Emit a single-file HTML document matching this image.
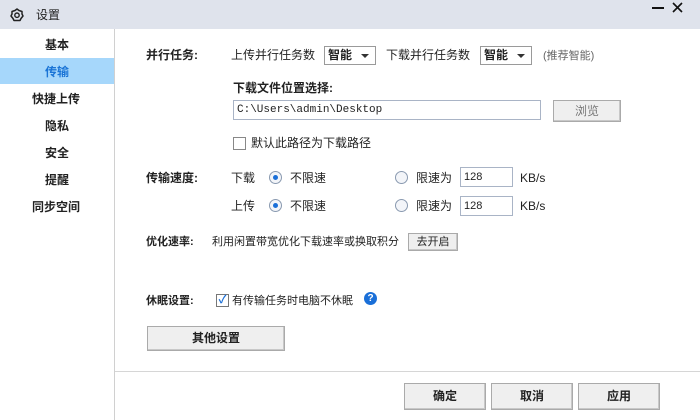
<!DOCTYPE html>
<html><head><meta charset="utf-8"><style>
*{margin:0;padding:0;box-sizing:border-box}
body{width:700px;height:420px;background:#fff;position:relative;overflow:hidden;font-family:"Liberation Sans","Noto Sans CJK SC",sans-serif;font-size:12px;color:#222}
.a{position:absolute;white-space:nowrap;line-height:16px}
.b{font-weight:bold}
.sel{position:absolute;border:1px solid #9a9a9a;background:#fff;height:19px;font-weight:bold;padding-left:3px;line-height:17px}
.sel:after{content:"";position:absolute;right:6px;top:7px;border:4px solid transparent;border-top:4px solid #333;border-bottom:none}
.btn{position:absolute;background:#efefef;border:1px solid #aaa;text-align:center;box-shadow:inset -1px -1px 0 #c8c8c8}
.radio{position:absolute;width:13px;height:13px;border-radius:50%;border:1px solid #8a9ab0;background:#f3f5f9}
.radio.on:after{content:"";position:absolute;left:3px;top:3px;width:5px;height:5px;border-radius:50%;background:#1a6fd8}
.inp{position:absolute;border:1px solid #a9b4c6;background:#fff;height:20px;line-height:18px;padding-left:3px}
</style></head><body>
<div style="position:absolute;left:0;top:0;width:700px;height:29px;background:#dfe3ec"></div>
<svg class="a" style="left:10px;top:8px" width="14" height="14" viewBox="0 0 14 14"><polygon points="7,1 9,2.5 12,3.5 12,6 13,8 11,10.5 10,12.5 7,12.5 4,12.5 3,10.5 1,8 2,6 2,3.5 5,2.5" fill="none" stroke="#222" stroke-width="1.5" stroke-linejoin="round"/><circle cx="7" cy="7.2" r="2.2" fill="none" stroke="#222" stroke-width="1.4"/></svg>
<div class="a" style="left:36px;top:7px">设置</div>
<div style="position:absolute;left:652px;top:7px;width:12px;height:2px;background:#111"></div>
<svg class="a" style="left:672px;top:2px" width="11" height="11" viewBox="0 0 11 11"><path d="M1 1L10 10M10 1L1 10" stroke="#111" stroke-width="1.6"/></svg>
<div style="position:absolute;left:114px;top:29px;width:1px;height:391px;background:#d0d0d0"></div>
<div style="position:absolute;left:0;top:58px;width:114px;height:26px;background:#a6d7fb"></div>
<div class="a b" style="left:45px;top:37px">基本</div>
<div class="a b" style="left:45px;top:64px;color:#1a74d6">传输</div>
<div class="a b" style="left:32px;top:91px">快捷上传</div>
<div class="a b" style="left:45px;top:118px">隐私</div>
<div class="a b" style="left:45px;top:145px">安全</div>
<div class="a b" style="left:45px;top:172px">提醒</div>
<div class="a b" style="left:32px;top:199px">同步空间</div>

<div class="a b" style="left:146px;top:47px">并行任务:</div>
<div class="a" style="left:231px;top:47px">上传并行任务数</div>
<div class="sel" style="left:324px;top:46px;width:52px">智能</div>
<div class="a" style="left:386px;top:47px">下载并行任务数</div>
<div class="sel" style="left:480px;top:46px;width:52px">智能</div>
<div class="a" style="left:543px;top:48px;color:#666;font-size:11px">(推荐智能)</div>
<div class="a b" style="left:233px;top:80px">下载文件位置选择:</div>
<div class="inp" style="left:233px;top:100px;width:308px;font-family:'Liberation Mono',monospace;font-size:11px">C:\Users\admin\Desktop</div>
<div class="btn" style="left:553px;top:100px;width:68px;height:22px;line-height:20px;color:#777">浏览</div>
<div style="position:absolute;left:233px;top:137px;width:13px;height:13px;border:1px solid #888;background:#fff"></div>
<div class="a" style="left:251px;top:135px">默认此路径为下载路径</div>

<div class="a b" style="left:146px;top:170px">传输速度:</div>
<div class="a" style="left:231px;top:170px">下载</div>
<div class="radio on" style="left:269px;top:171px"></div>
<div class="a" style="left:290px;top:170px">不限速</div>
<div class="radio" style="left:395px;top:171px"></div>
<div class="a" style="left:416px;top:170px">限速为</div>
<div class="inp" style="left:460px;top:167px;width:53px;font-size:11px">128</div>
<div class="a" style="left:520px;top:170px">KB/s</div>
<div class="a" style="left:231px;top:198px">上传</div>
<div class="radio on" style="left:269px;top:199px"></div>
<div class="a" style="left:290px;top:198px">不限速</div>
<div class="radio" style="left:395px;top:199px"></div>
<div class="a" style="left:416px;top:198px">限速为</div>
<div class="inp" style="left:460px;top:196px;width:53px;font-size:11px">128</div>
<div class="a" style="left:520px;top:198px">KB/s</div>

<div class="a b" style="left:146px;top:234px;font-size:11px">优化速率:</div>
<div class="a" style="left:212px;top:234px;font-size:11px">利用闲置带宽优化下载速率或换取积分</div>
<div class="btn" style="left:408px;top:233px;width:50px;height:18px;line-height:16px;font-size:11px">去开启</div>

<div class="a b" style="left:146px;top:293px;font-size:11px">休眠设置:</div>
<div style="position:absolute;left:216px;top:294px;width:13px;height:13px;border:1px solid #777;background:#fff;color:#1a6fd8;font-size:11px;line-height:11px;text-align:center;font-weight:bold">✓</div>
<div class="a" style="left:232px;top:293px;font-size:11px">有传输任务时电脑不休眠</div>
<div style="position:absolute;left:364px;top:292px;width:13px;height:13px;border-radius:50%;background:#1a6fd8;color:#fff;font-size:10px;line-height:13px;text-align:center;font-weight:bold">?</div>
<div class="btn b" style="left:147px;top:326px;width:138px;height:25px;line-height:23px">其他设置</div>

<div style="position:absolute;left:115px;top:371px;width:585px;height:1px;background:#d6d6d6"></div>
<div class="btn b" style="left:404px;top:383px;width:82px;height:27px;line-height:25px">确定</div>
<div class="btn b" style="left:491px;top:383px;width:82px;height:27px;line-height:25px">取消</div>
<div class="btn b" style="left:578px;top:383px;width:82px;height:27px;line-height:25px">应用</div>
</body></html>
